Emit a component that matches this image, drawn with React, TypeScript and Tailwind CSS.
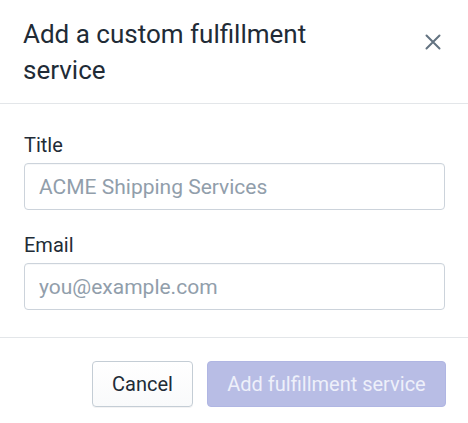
import { useState } from 'react';

interface FieldProps {
  label: string;
  placeholder: string;
  type?: string;
}

const Field = ({ label, placeholder, type = 'text' }: FieldProps) => {
  const [value, setValue] = useState('');

  return (
    <label className="flex flex-col gap-[4px]">
      <span className="text-[20px] leading-[28px] text-[#212b36]">{label}</span>
      <input
        type={type}
        value={value}
        onChange={(e) => setValue(e.target.value)}
        placeholder={placeholder}
        className="h-[47px] w-full rounded-[4px] border border-[#ccd3db] bg-white px-[14px] text-[21px] text-[#212b36] shadow-[inset_0_1px_0_0_rgba(99,115,129,0.05)] outline-none placeholder:text-[#919eab]"
      />
    </label>
  );
};

const App = () => {
  return (
    <div className="h-[423px] w-[468px] bg-white font-['Roboto',sans-serif] antialiased">
      <div className="flex items-start justify-between border-b border-[#e3e6e9] pt-[16px] pr-[25px] pb-[15px] pl-[23px]">
        <h2 className="max-w-[340px] text-[26px] leading-[36px] text-[#212b36]">
          Add a custom fulfillment service
        </h2>
        <button
          type="button"
          aria-label="close"
          className="mt-[16px] text-[#637381]"
        >
          <svg
            width="20"
            height="20"
            viewBox="0 0 20 20"
            fill="none"
            stroke="currentColor"
            strokeWidth="2"
            strokeLinecap="round"
          >
            <path d="M3.5 3.5L16.5 16.5M16.5 3.5L3.5 16.5" />
          </svg>
        </button>
      </div>

      <div className="flex flex-col gap-[21px] pt-[27px] pr-[23px] pb-[27px] pl-[24px]">
        <Field
          label="Title"
          placeholder="ACME Shipping Services"
        />
        <Field
          label="Email"
          type="email"
          placeholder="you@example.com"
        />
      </div>

      <div className="flex justify-end gap-[14px] border-t border-[#e3e6e9] pt-[23px] pr-[22px] pb-[16px]">
        <button
          type="button"
          className="h-[46px] w-[101px] rounded-[4px] border border-[#c4cdd5] bg-gradient-to-b from-white to-[#f9fafb] text-[20px] text-[#212b36] shadow-[0_1px_0_0_rgba(22,29,37,0.05)]"
        >
          Cancel
        </button>
        <button
          type="button"
          disabled
          className="h-[46px] w-[239px] rounded-[4px] border border-[#b0b6e3] bg-[#b8bde5] text-[20px] text-[#eef0fa]"
        >
          Add fulfillment service
        </button>
      </div>
    </div>
  );
};

export default App;
